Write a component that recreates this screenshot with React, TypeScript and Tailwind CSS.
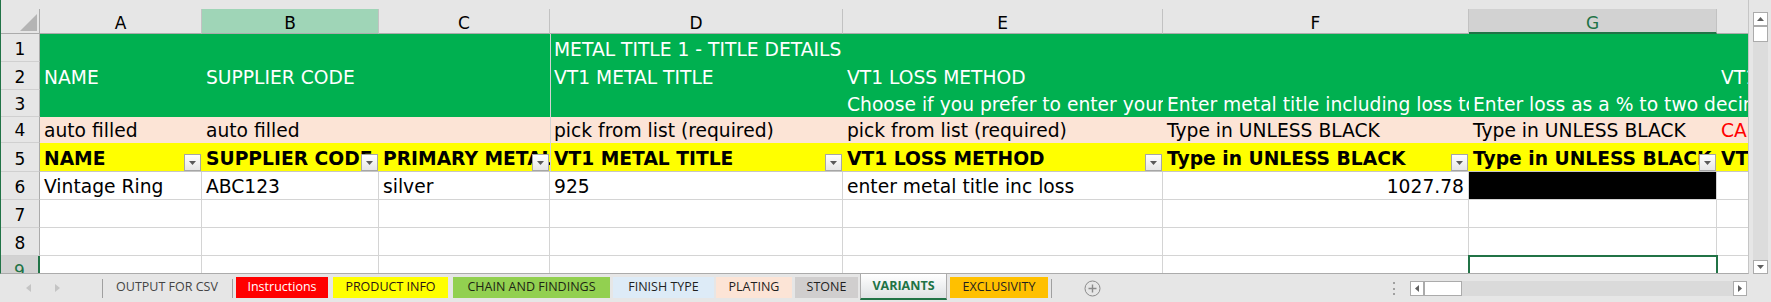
import type { ReactNode } from 'react';

type CellDef = {
  text?: string;
  spill?: boolean; // text runs on into the empty cell to its right
  right?: boolean;
  cls?: string;
  filter?: boolean;
  extra?: ReactNode;
};

const COL_W = [
  'w-[162px]', 'w-[177px]', 'w-[171px]', 'w-[293px]',
  'w-[320px]', 'w-[306px]', 'w-[248px]', 'w-[32px]',
];

const D_EDGE = 'border-l border-l-[#d2d2d2] pl-[3px]';

function FilterButton() {
  return (
    <span className="absolute right-[1px] bottom-0 flex h-[17px] w-[17px] items-center justify-center border border-[#a6a6a6] bg-linear-to-b from-white to-[#e6e6e6]">
      <svg width="7" height="4" viewBox="0 0 7 4">
        <path d="M0 0h7L3.5 4z" fill="#5a5a5a" />
      </svg>
    </span>
  );
}

function RowHead({ num, active }: { num: number; active?: boolean }) {
  return (
    <div
      className={`flex w-[39px] shrink-0 items-end justify-center pb-[2px] text-[17px] leading-[20px] border-b border-b-[#d0d0d0] ${
        active
          ? 'bg-[#d2d2d2] text-[#217346] border-r-2 border-r-[#217346]'
          : 'bg-[#e6e6e6] border-r border-r-[#ababab]'
      }`}
    >
      {num}
    </div>
  );
}

function Row({
  num, h, bg = 'bg-white', cells, grid, cellCls = '', active,
}: {
  num: number;
  h: string;
  bg?: string;
  cells: CellDef[];
  grid?: boolean;
  cellCls?: string;
  active?: boolean;
}) {
  return (
    <div className={`flex shrink-0 ${h} ${bg}`}>
      <RowHead num={num} active={active} />
      {COL_W.map((w, i) => {
        const c = cells[i] ?? {};
        return (
          <div
            key={i}
            className={`relative flex shrink-0 items-end whitespace-nowrap px-[4px] pb-[1px] text-[18.7px] leading-[22px] ${w} ${
              c.spill ? 'z-10' : 'overflow-hidden'
            } ${c.right ? 'justify-end' : ''} ${
              grid ? 'border-r border-b border-[#d4d4d4]' : ''
            } ${cellCls} ${c.cls ?? ''}`}
          >
            {c.text}
            {c.filter && <FilterButton />}
            {c.extra}
          </div>
        );
      })}
    </div>
  );
}

function ColumnHeader() {
  const letters = ['A', 'B', 'C', 'D', 'E', 'F', 'G', ''];
  return (
    <div className="flex h-[25px] shrink-0 bg-[#e6e6e6]">
      <div className="relative w-[39px] shrink-0 border-r border-b border-[#ababab]">
        <svg className="absolute left-0 top-0" width="39" height="24" viewBox="0 0 39 24">
          <path d="M19 22H36V5z" fill="#b4b4b4" />
        </svg>
      </div>
      {letters.map((l, i) => (
        <div
          key={i}
          className={`flex shrink-0 justify-center pt-[4px] text-[17px] leading-[20px] border-r border-r-[#c2c2c2] ${COL_W[i]} ${
            l === 'G'
              ? 'bg-[#d2d2d2] text-[#217346] border-b-2 border-b-[#217346]'
              : l === 'B'
                ? 'bg-[#9fd5b7] border-b border-b-[#ababab]'
                : 'border-b border-b-[#ababab]'
          }`}
        >
          {l}
        </div>
      ))}
    </div>
  );
}

function VScroll() {
  return (
    <div className="w-[22px] shrink-0 pl-[4px] pt-[12px]">
      <div className="flex h-[262px] w-[15px] flex-col bg-[#dcdcdc]">
        <div className="flex h-[14px] items-center justify-center border border-[#ababab] bg-white">
          <svg width="7" height="4" viewBox="0 0 7 4"><path d="M0 4h7L3.5 0z" fill="#606060" /></svg>
        </div>
        <div className="h-[16px] border border-[#ababab] bg-white" />
        <div className="flex-1" />
        <div className="flex h-[14px] items-center justify-center border border-[#ababab] bg-white">
          <svg width="7" height="4" viewBox="0 0 7 4"><path d="M0 0h7L3.5 4z" fill="#606060" /></svg>
        </div>
      </div>
    </div>
  );
}

const TABS: { label: string; cls: string }[] = [
  { label: 'Instructions',       cls: 'ml-[3px] w-[92px] bg-[#ff0000] text-white' },
  { label: 'PRODUCT INFO',       cls: 'ml-[5px] w-[115px] bg-[#ffff00] text-[#2a1414]' },
  { label: 'CHAIN AND FINDINGS', cls: 'ml-[5px] w-[157px] bg-[#92d050] text-[#1d2614]' },
  { label: 'FINISH TYPE',        cls: 'ml-[3px] w-[101px] bg-[#ddebf7] text-[#1f1f1f]' },
  { label: 'PLATING',            cls: 'ml-[2px] w-[76px] bg-[#fce4d6] text-[#1f1f1f]' },
  { label: 'STONE',              cls: 'ml-[3px] w-[63px] bg-[#d0cece] text-[#1f1f1f]' },
];

function SheetTabs() {
  return (
    <div className="flex h-[28px] shrink-0 items-start bg-[#e6e6e6] font-['Open_Sans',sans-serif] text-[12.5px]">
      <svg className="ml-[26px] mt-[10px]" width="5" height="8" viewBox="0 0 5 8"><path d="M5 0v8L0 4z" fill="#c4c4c4" /></svg>
      <svg className="ml-[24px] mt-[10px]" width="5" height="8" viewBox="0 0 5 8"><path d="M0 0v8l5-4z" fill="#c4c4c4" /></svg>
      <div className="ml-[42px] mt-[5px] h-[19px] w-px bg-[#a0a0a0]" />
      <div className="mt-[3px] flex h-[21px] w-[128px] items-center justify-center text-[#444]">OUTPUT FOR CSV</div>
      <div className="ml-[1px] mt-[5px] h-[19px] w-px bg-[#a0a0a0]" />
      {TABS.map(t => (
        <div key={t.label} className={`mt-[3px] flex h-[21px] shrink-0 items-center justify-center ${t.cls}`}>
          {t.label}
        </div>
      ))}
      <div className="ml-[2px] flex h-[26px] w-[87px] shrink-0 items-center justify-center border-x border-[#ababab] border-b-2 border-b-[#217346] bg-linear-to-b from-white to-[#dfe2e4] font-bold text-[#217346]">
        VARIANTS
      </div>
      <div className="ml-[3px] mt-[3px] flex h-[21px] w-[98px] shrink-0 items-center justify-center bg-[#ffc000] text-[#1f1f1f]">
        EXCLUSIVITY
      </div>
      <div className="ml-[3px] mt-[5px] h-[19px] w-px bg-[#a0a0a0]" />
      <svg className="ml-[32px] mt-[6px]" width="17" height="17" viewBox="0 0 17 17">
        <circle cx="8.5" cy="8.5" r="7.5" fill="none" stroke="#8a8a8a" strokeWidth="1" />
        <path d="M8.5 4.5v8M4.5 8.5h8" stroke="#8a8a8a" strokeWidth="1.4" />
      </svg>
      <div className="ml-auto mt-[7px] flex h-[15px] flex-col justify-between py-[1px]">
        <span className="h-[2px] w-[2px] bg-[#a0a0a0]" />
        <span className="h-[2px] w-[2px] bg-[#a0a0a0]" />
        <span className="h-[2px] w-[2px] bg-[#a0a0a0]" />
      </div>
      <div className="ml-[15px] mr-[24px] mt-[7px] flex h-[15px] w-[337px] bg-[#dadada]">
        <div className="flex w-[14px] items-center justify-center border border-[#ababab] bg-white">
          <svg width="4" height="7" viewBox="0 0 4 7"><path d="M4 0v7L0 3.5z" fill="#606060" /></svg>
        </div>
        <div className="w-[38px] border border-[#ababab] bg-white" />
        <div className="flex-1" />
        <div className="flex w-[14px] items-center justify-center border border-[#ababab] bg-white">
          <svg width="4" height="7" viewBox="0 0 4 7"><path d="M0 0v7l4-3.5z" fill="#606060" /></svg>
        </div>
      </div>
    </div>
  );
}

export default function App() {
  return (
    <div className="flex h-[302px] w-[1771px] flex-col overflow-hidden bg-[#e6e6e6] font-['DejaVu_Sans',sans-serif] text-black">
      <div className="flex h-[274px] shrink-0">
        <div className="flex h-[274px] w-[1749px] shrink-0 flex-col overflow-hidden border-l border-l-[#217346] border-r border-r-[#c6c6c6] border-b border-b-[#ababab]">
          <div className="h-[9px] shrink-0" />
          <ColumnHeader />

          {/* green title block */}
          <Row
            num={1} h="h-[28px]" bg="bg-[#00b050]" cellCls="text-white"
            cells={[{}, {}, {}, { text: 'METAL TITLE 1 - TITLE DETAILS', spill: true, cls: D_EDGE }]}
          />
          <Row
            num={2} h="h-[28px]" bg="bg-[#00b050]" cellCls="text-white"
            cells={[
              { text: 'NAME' }, { text: 'SUPPLIER CODE' }, {},
              { text: 'VT1 METAL TITLE', cls: D_EDGE }, { text: 'VT1 LOSS METHOD' }, {}, {},
              { text: 'VT1 LOSS %' },
            ]}
          />
          <Row
            num={3} h="h-[27px]" bg="bg-[#00b050]" cellCls="text-white"
            cells={[
              {}, {}, {}, { cls: D_EDGE },
              { text: 'Choose if you prefer to enter your metal title including loss' },
              { text: 'Enter metal title including loss to two decimal places' },
              { text: 'Enter loss as a % to two decimal places', spill: true },
            ]}
          />
          <Row
            num={4} h="h-[26px]" bg="bg-[#fce4d6]"
            cells={[
              { text: 'auto filled' }, { text: 'auto filled' }, {},
              { text: 'pick from list (required)', cls: D_EDGE },
              { text: 'pick from list (required)' },
              { text: 'Type in UNLESS BLACK' }, { text: 'Type in UNLESS BLACK' },
              { text: 'CALCULATED', cls: 'text-[#ff0000]' },
            ]}
          />
          <Row
            num={5} h="h-[29px]" bg="bg-[#ffff00]" cellCls="font-bold border-b border-b-[#c6c6c6]"
            cells={[
              { text: 'NAME', filter: true },
              { text: 'SUPPLIER CODE', filter: true },
              { text: 'PRIMARY METAL', filter: true },
              { text: 'VT1 METAL TITLE', filter: true, cls: D_EDGE },
              { text: 'VT1 LOSS METHOD', filter: true },
              { text: 'Type in UNLESS BLACK', filter: true },
              { text: 'Type in UNLESS BLACK', filter: true },
              { text: 'VT1 LOSS %' },
            ]}
          />

          {/* data */}
          <Row
            num={6} h="h-[28px]" grid
            cells={[
              { text: 'Vintage Ring' }, { text: 'ABC123' }, { text: 'silver' }, { text: '925' },
              { text: 'enter metal title inc loss' }, { text: '1027.78', right: true },
              { cls: 'bg-black' },
            ]}
          />
          <Row num={7} h="h-[28px]" grid cells={[]} />
          <Row num={8} h="h-[28px]" grid cells={[]} />
          <Row
            num={9} h="h-[28px]" grid active
            cells={[
              {}, {}, {}, {}, {}, {},
              {
                spill: true,
                extra: <span className="absolute left-[-1px] top-[-1px] h-[30px] w-[250px] border-2 border-[#217346]" />,
              },
            ]}
          />
        </div>
        <VScroll />
      </div>
      <SheetTabs />
    </div>
  );
}
